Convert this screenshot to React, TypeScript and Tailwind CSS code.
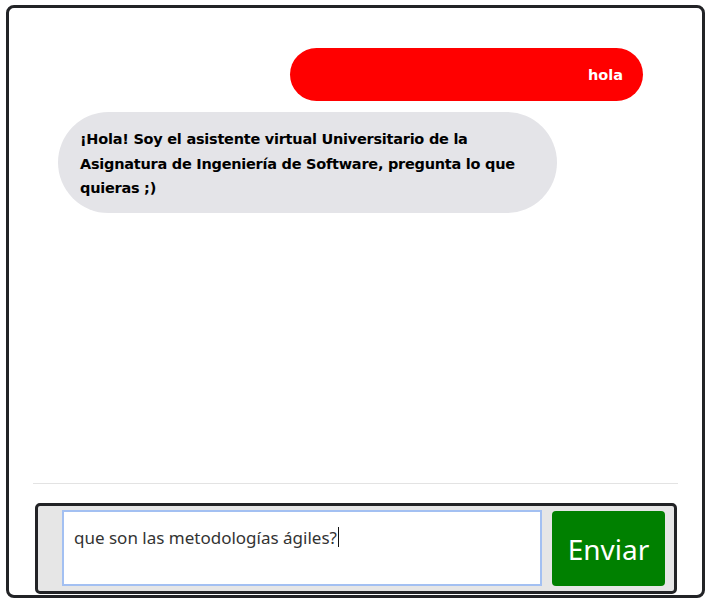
export default function App() {
  return (
    <div className="h-[604px] w-[715px] bg-white pl-[6px] pt-[5px]">
      <div className="flex h-[593px] w-[699px] flex-col rounded-lg border-[3px] border-[#222326] bg-white">
        <div className="flex flex-1 flex-col pt-[40px]" style={{ fontFamily: '"DejaVu Sans", Verdana, sans-serif' }}>
          <div className="mr-[59px] flex h-[53px] w-[353px] items-center justify-end self-end rounded-full bg-[#ff0000] pr-[20px] pt-[3px] text-[14.5px] font-bold text-white">
            hola
          </div>
          <div className="ml-[49px] mt-[11px] flex h-[101px] w-[499px] items-center rounded-full bg-[#e4e4e8] px-[22px] pt-[3px] text-[14.5px] font-bold leading-[24.5px] tracking-[-0.25px] text-black">
            <p>
              ¡Hola! Soy el asistente virtual Universitario de la Asignatura de Ingeniería de Software, pregunta lo que quieras ;)
            </p>
          </div>
        </div>

        <div className="mx-[24px] h-px bg-[#e3e3e3]" />

        <form
          className="mb-[1px] ml-[26px] mr-[25px] mt-[19px] flex h-[91px] gap-[10px] rounded-[5px] border-[3px] border-[#222326] bg-[#e6e6e6] pl-[24px] pr-[9px] pt-[4px]"
          style={{ fontFamily: '"Noto Sans", "Open Sans", sans-serif' }}
          onSubmit={(e) => e.preventDefault()}
        >
          <div className="h-[76px] w-[480px] border-2 border-[#a3c0f2] bg-white pl-[10px] pt-[12px] text-[17px] leading-[23px] text-[#333]">
            que son las metodologías ágiles?
            <span className="ml-px inline-block h-[20px] w-px translate-y-[3px] bg-[#111]" />
          </div>
          <button
            type="submit"
            className="mt-px h-[75px] w-[113px] rounded-[4px] bg-[#008000] text-[28px] text-white"
          >
            Enviar
          </button>
        </form>
      </div>
    </div>
  );
}
